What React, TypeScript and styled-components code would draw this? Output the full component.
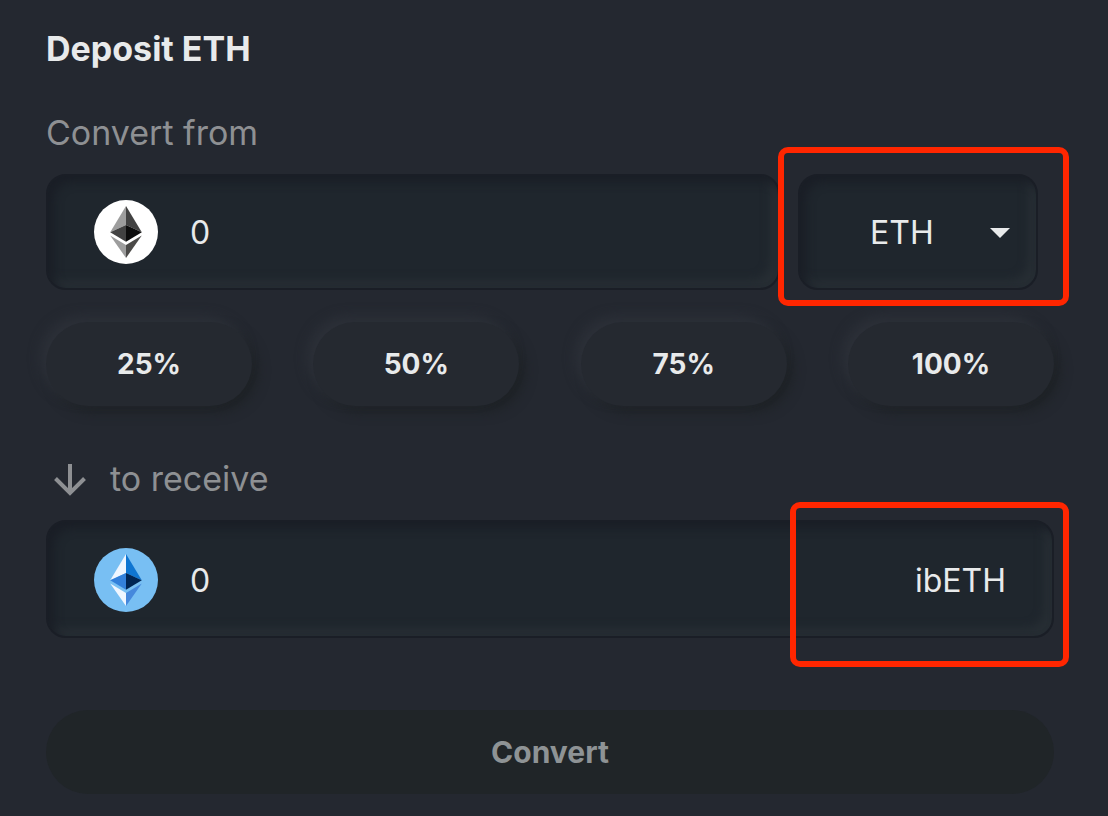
import React, { useState } from "react";
import styled, { createGlobalStyle } from "styled-components";

const GlobalStyle = createGlobalStyle`
  *, *::before, *::after { box-sizing: border-box; }
  body {
    margin: 0;
    background: #242830;
    color: #e8eaeb;
    font-family: Inter, Roboto, "Liberation Sans", sans-serif;
    font-size: 32px;
  }
`;

const Panel = styled.form`
  display: flex;
  flex-direction: column;
  min-height: 100vh;
  padding: 29px 54px 22px 46px;
`;

const Title = styled.h1`
  margin: 0;
  font-size: 34px;
  line-height: 40px;
  font-weight: 700;
`;

const Caption = styled.label`
  display: flex;
  align-items: center;
  gap: 16px;
  font-size: 34px;
  line-height: 40px;
  color: #8e9093;
`;

const FromSection = styled.section`
  display: flex;
  flex-direction: column;
  margin-top: 44px;
  gap: 21px;
`;

const ToSection = styled(FromSection)`
  margin-top: 53px;
`;

const FromRow = styled.div`
  display: flex;
  gap: 18px;
  padding-right: 16px;
`;

const Well = styled.div`
  display: flex;
  align-items: center;
  height: 116px;
  border: 2px solid #1a1e26;
  border-radius: 20px;
  background: #1f262d;
  box-shadow: inset 6px 6px 10px #1a1e26, inset -8px -8px 10px #272e34;
`;

const AmountWell = styled(Well)`
  flex: 1;
  min-width: 0;
  gap: 32px;
  padding: 0 46px;
`;

const ReceiveWell = styled(AmountWell)`
  flex: none;
  position: relative;
  height: 118px;
  padding-top: 2px;
`;

const AmountInput = styled.input`
  flex: 1;
  min-width: 0;
  padding: 0;
  border: 0;
  outline: 0;
  background: transparent;
  color: inherit;
  font: inherit;
`;

const TokenWell = styled(Well)`
  position: relative;
  flex: none;
  width: 240px;
`;

const TokenSelect = styled.select`
  width: 100%;
  height: 100%;
  padding: 0 70px;
  border: 0;
  outline: 0;
  appearance: none;
  background: transparent;
  color: inherit;
  font: inherit;
`;

const Caret = styled.svg`
  position: absolute;
  top: 52px;
  right: 26px;
  pointer-events: none;
`;

const Highlight = styled.span<{ $inset: string }>`
  position: absolute;
  inset: ${(p) => p.$inset};
  border: 6px solid #ff2600;
  border-radius: 10px;
  pointer-events: none;
`;

const ReceiveHighlight = styled(Highlight)`
  width: 279px;
`;

const Percentages = styled.div`
  display: flex;
  justify-content: space-between;
  margin-top: 32px;
`;

const PillButton = styled.button`
  height: 84px;
  border: 0;
  border-radius: 42px;
  font: inherit;
  font-size: 30px;
  font-weight: 700;
`;

const PercentButton = styled(PillButton)`
  width: 206px;
  background: #252930;
  color: inherit;
  font-size: 28px;
  box-shadow: -6px -6px 12px #2c3038, 6px 6px 12px #1e2226;
`;

const ConvertButton = styled(PillButton)`
  margin-top: 72px;
  background: #202528;
  color: #8e9395;
`;

type CoinColors = {
  disc: string;
  topLeft: string;
  topRight: string;
  midLeft: string;
  midRight: string;
  lowLeft: string;
  lowRight: string;
};

const ethColors: CoinColors = {
  disc: "#ffffff",
  topLeft: "#9d9d9d",
  topRight: "#424242",
  midLeft: "#424242",
  midRight: "#0d0d0d",
  lowLeft: "#9d9d9d",
  lowRight: "#4b4a48",
};

const ibEthColors: CoinColors = {
  disc: "#78bff3",
  topLeft: "#f0f6ff",
  topRight: "#0f75d1",
  midLeft: "#3380db",
  midRight: "#002554",
  lowLeft: "#f0f6ff",
  lowRight: "#4688dc",
};

function Coin({ colors }: { colors: CoinColors }) {
  return (
    <svg width="64" height="64" viewBox="0 0 64 64" aria-hidden="true">
      <circle cx="32" cy="32" r="32" fill={colors.disc} />
      <path d="M32 6 16.2 32.3 32 25Z" fill={colors.topLeft} />
      <path d="M32 6 47.8 32.3 32 25Z" fill={colors.topRight} />
      <path d="M32 25 16.2 32.3 32 41.7Z" fill={colors.midLeft} />
      <path d="M32 25 47.8 32.3 32 41.7Z" fill={colors.midRight} />
      <path d="M16.2 35.5 32 45v13Z" fill={colors.lowLeft} />
      <path d="M47.8 35.5 32 45v13Z" fill={colors.lowRight} />
    </svg>
  );
}

const percentages = [25, 50, 75, 100];

export default function App() {
  const [amount, setAmount] = useState("0");

  return (
    <>
      <GlobalStyle />
      <Panel onSubmit={(e) => e.preventDefault()}>
        <Title>Deposit ETH</Title>

        <FromSection>
          <Caption htmlFor="from-amount">Convert from</Caption>
          <FromRow>
            <AmountWell>
              <Coin colors={ethColors} />
              <AmountInput
                id="from-amount"
                inputMode="decimal"
                value={amount}
                onChange={(e) => setAmount(e.target.value)}
              />
            </AmountWell>
            <TokenWell>
              <TokenSelect aria-label="Token" defaultValue="ETH">
                <option>ETH</option>
              </TokenSelect>
              <Caret width="20" height="10" viewBox="0 0 20 10" aria-hidden="true">
                <path d="M0 0h20L10 10Z" fill="#e8eaeb" />
              </Caret>
              <Highlight $inset="-29px -33px -18px -22px" />
            </TokenWell>
          </FromRow>
        </FromSection>

        <Percentages>
          {percentages.map((p) => (
            <PercentButton key={p} type="button">
              {p}%
            </PercentButton>
          ))}
        </Percentages>

        <ToSection>
          <Caption htmlFor="to-amount">
            <svg width="48" height="40" viewBox="0 0 48 40" aria-hidden="true">
              <path
                d="M24 5v28M9.500 19.500 24 34l14.500-14.500"
                fill="none"
                stroke="#8e9093"
                strokeWidth="4"
              />
            </svg>
            to receive
          </Caption>
          <ReceiveWell>
            <Coin colors={ibEthColors} />
            <AmountInput id="to-amount" value={amount} readOnly />
            <span>ibETH</span>
            <ReceiveHighlight $inset="-20px -17px -31px auto" />
          </ReceiveWell>
        </ToSection>

        <ConvertButton type="submit" disabled>
          Convert
        </ConvertButton>
      </Panel>
    </>
  );
}
